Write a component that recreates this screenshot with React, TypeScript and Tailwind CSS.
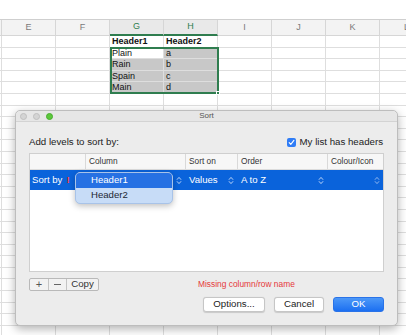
import React from 'react';

const cols = ['E', 'F', 'G', 'H', 'I', 'J', 'K', 'L'];

type Row = { g?: string; h?: string; bold?: boolean; gFill?: boolean; hFill?: boolean };

const dataRows: Row[] = [
  { g: 'Header1', h: 'Header2', bold: true },
  { g: 'Plain', h: 'a', hFill: true },
  { g: 'Rain', h: 'b', gFill: true, hFill: true },
  { g: 'Spain', h: 'c', gFill: true, hFill: true },
  { g: 'Main', h: 'd', gFill: true, hFill: true },
];

const rows: Row[] = [...dataRows, ...Array.from({ length: 22 }, () => ({} as Row))];

function Chevrons({ className }: { className?: string }) {
  return (
    <svg width="6" height="9" viewBox="0 0 6 9" className={className}>
      <path d="M1.2 3.4 L3 1.4 L4.8 3.4" fill="none" stroke="currentColor" strokeWidth="0.9" strokeLinecap="round" strokeLinejoin="round" />
      <path d="M1.2 5.6 L3 7.6 L4.8 5.6" fill="none" stroke="currentColor" strokeWidth="0.9" strokeLinecap="round" strokeLinejoin="round" />
    </svg>
  );
}

function Sheet() {
  return (
    <div className="relative">
      <div className="h-[19px] bg-white" />
      {/* column header row */}
      <div className="flex h-[17px] border-t border-[#cfcfcf] bg-[#f3f3f3]">
        <div className="w-[2px] shrink-0 border-r border-b border-[#d6d6d6]" />
        {cols.map((c) => {
          const sel = c === 'G' || c === 'H';
          return (
            <div
              key={c}
              className={
                sel
                  ? 'w-[54px] shrink-0 flex items-center justify-center border-r border-[#d6d6d6] border-b-2 border-b-[#2f7d4f] bg-[#e9e9e9] text-[9px] text-[#2f7d4f]'
                  : 'w-[54px] shrink-0 flex items-center justify-center border-r border-b border-[#d6d6d6] text-[9px] text-[#7a7a7a]'
              }
            >
              {c}
            </div>
          );
        })}
      </div>
      {rows.map((r, i) => (
        <div key={i} className="flex h-[11.6px] border-b border-[#dedede]">
          <div className="w-[2px] shrink-0 border-r border-[#dedede]" />
          {cols.map((c) => {
            const isG = c === 'G';
            const isH = c === 'H';
            const txt = isG ? r.g : isH ? r.h : undefined;
            const fill = (isG && r.gFill) || (isH && r.hFill);
            return (
              <div
                key={c}
                className={
                  (fill ? 'bg-[#c8c8c8] ' : 'bg-white ') +
                  (r.bold ? 'font-bold ' : '') +
                  'w-[54px] shrink-0 border-r border-[#dedede] pl-[2px] text-[9px] leading-[11px] text-[#111]'
                }
              >
                {txt}
              </div>
            );
          })}
        </div>
      ))}
      {/* selection border */}
      <div className="absolute left-[109.5px] top-[46.5px] w-[109.5px] h-[47px] border-2 border-[#2f7d4f]">
        <div className="absolute -right-[3px] -bottom-[3px] w-[4px] h-[4px] bg-[#2f7d4f] border border-white" />
      </div>
    </div>
  );
}

function Dialog() {
  return (
    <div className="absolute left-[15px] top-[110px] w-[383px] h-[216px] rounded-[5px] border border-[#bdbdbd] bg-[#ececec] shadow-[0_3px_10px_rgba(0,0,0,0.3)] flex flex-col">
      <div className="relative h-[11px] flex items-center border-b border-[#d3d3d3] bg-[#e6e6e6] rounded-t-[5px]">
        <div className="flex gap-[6px] pl-[3.5px]">
          <span className="w-[7px] h-[7px] rounded-full bg-[#d4d4d4] border border-[#bfbfbf]" />
          <span className="w-[7px] h-[7px] rounded-full bg-[#d4d4d4] border border-[#bfbfbf]" />
          <span className="w-[7px] h-[7px] rounded-full bg-[#5cc83c] border border-[#47ad2d]" />
        </div>
        <span className="absolute inset-0 flex items-center justify-center text-[8px] text-[#555]">Sort</span>
      </div>

      <div className="flex flex-col px-[13px]">
        <div className="mt-[15px] h-[11px] flex items-center justify-between text-[9.7px] text-[#222]">
          <span>Add levels to sort by:</span>
          <span className="flex items-center gap-[4px] pr-[1px]">
            <span className="w-[9px] h-[9px] rounded-[2px] bg-[#2f7cf6] flex items-center justify-center">
              <svg width="7" height="7" viewBox="0 0 7 7">
                <path d="M1.2 3.7 L2.8 5.3 L5.9 1.4" fill="none" stroke="white" strokeWidth="1.1" strokeLinecap="round" strokeLinejoin="round" />
              </svg>
            </span>
            <span>My list has headers</span>
          </span>
        </div>

        {/* table */}
        <div className="relative mt-[5px] h-[119px] border border-[#cfcfcf] bg-white flex flex-col">
          <div className="flex h-[16px] bg-[#f7f7f7] border-b border-[#dcdcdc] text-[8.3px] text-[#333]">
            <div className="w-[55px] shrink-0" />
            <div className="w-[100px] shrink-0 flex items-center border-l border-[#d9d9d9] pl-[3px]">Column</div>
            <div className="w-[52px] shrink-0 flex items-center border-l border-[#d9d9d9] pl-[3px]">Sort on</div>
            <div className="w-[90px] shrink-0 flex items-center border-l border-[#d9d9d9] pl-[3px]">Order</div>
            <div className="flex-1 flex items-center border-l border-[#d9d9d9] pl-[3px]">Colour/Icon</div>
          </div>
          <div className="flex h-[20px] bg-[#0a63db] text-[9.6px] text-white">
            <div className="w-[55px] shrink-0 flex items-center pl-[2px]">
              Sort by<span className="ml-[4px] font-bold text-[#ff3b30]">!</span>
            </div>
            <div className="w-[100px] shrink-0 flex items-center justify-end pr-[3px] text-[#cfe0fb]">
              <Chevrons />
            </div>
            <div className="w-[52px] shrink-0 flex items-center justify-between pl-[4px] pr-[3px]">
              <span>Values</span>
              <Chevrons className="text-[#cfe0fb]" />
            </div>
            <div className="w-[90px] shrink-0 flex items-center justify-between pl-[4px] pr-[3px]">
              <span>A to Z</span>
              <Chevrons className="text-[#cfe0fb]" />
            </div>
            <div className="flex-1 flex items-center justify-end pr-[3px] text-[#9fbff0]">
              <Chevrons />
            </div>
          </div>

          {/* popup menu */}
          <div className="absolute left-[45px] top-[18px] w-[98px] h-[32px] rounded-[5px] bg-[#c7dcf7] border border-[#a8c3e8] shadow-[0_2px_6px_rgba(0,0,0,0.25)] flex flex-col py-[0px] text-[9.6px] overflow-hidden">
            <div className="h-[15px] bg-[#2671e3] text-white flex items-center pl-[15px]">Header1</div>
            <div className="h-[15px] text-[#1d2733] flex items-center pl-[15px]">Header2</div>
          </div>
        </div>

        {/* bottom controls */}
        <div className="mt-[6px] h-[13px] flex items-center">
          <div className="flex h-[13px] border border-[#b9b9b9] rounded-[2px] bg-[#f2f2f2] text-[9.7px] text-[#333]">
            <div className="w-[18px] flex items-center justify-center text-[#555] text-[11px] leading-none">+</div>
            <div className="w-[18px] flex items-center justify-center border-l border-[#c4c4c4] text-[#555]">
              <span className="block w-[7px] h-[1px] bg-[#666]" />
            </div>
            <div className="w-[32px] flex items-center justify-center border-l border-[#c4c4c4]">Copy</div>
          </div>
          <span className="ml-[99px] text-[8.4px] text-[#e5383b]">Missing column/row name</span>
        </div>

        <div className="mt-[6px] h-[15px] flex justify-end gap-[9px] text-[9.7px]">
          <div className="w-[62px] h-[15px] rounded-[3px] bg-white border border-[#c6c6c6] shadow-[0_0.5px_1px_rgba(0,0,0,0.15)] flex items-center justify-center text-[#222]">
            Options...
          </div>
          <div className="w-[50px] h-[15px] rounded-[3px] bg-white border border-[#c6c6c6] shadow-[0_0.5px_1px_rgba(0,0,0,0.15)] flex items-center justify-center text-[#222]">
            Cancel
          </div>
          <div className="w-[51px] h-[15px] rounded-[3px] bg-gradient-to-b from-[#4c98f8] to-[#1b6ff1] border border-[#2a73e8] flex items-center justify-center text-white">
            OK
          </div>
        </div>
      </div>
    </div>
  );
}

export default function App() {
  return (
    <div className="relative w-[406px] h-[335px] overflow-hidden bg-white font-['Liberation_Sans',Arial,sans-serif]">
      <Sheet />
      <Dialog />
    </div>
  );
}
